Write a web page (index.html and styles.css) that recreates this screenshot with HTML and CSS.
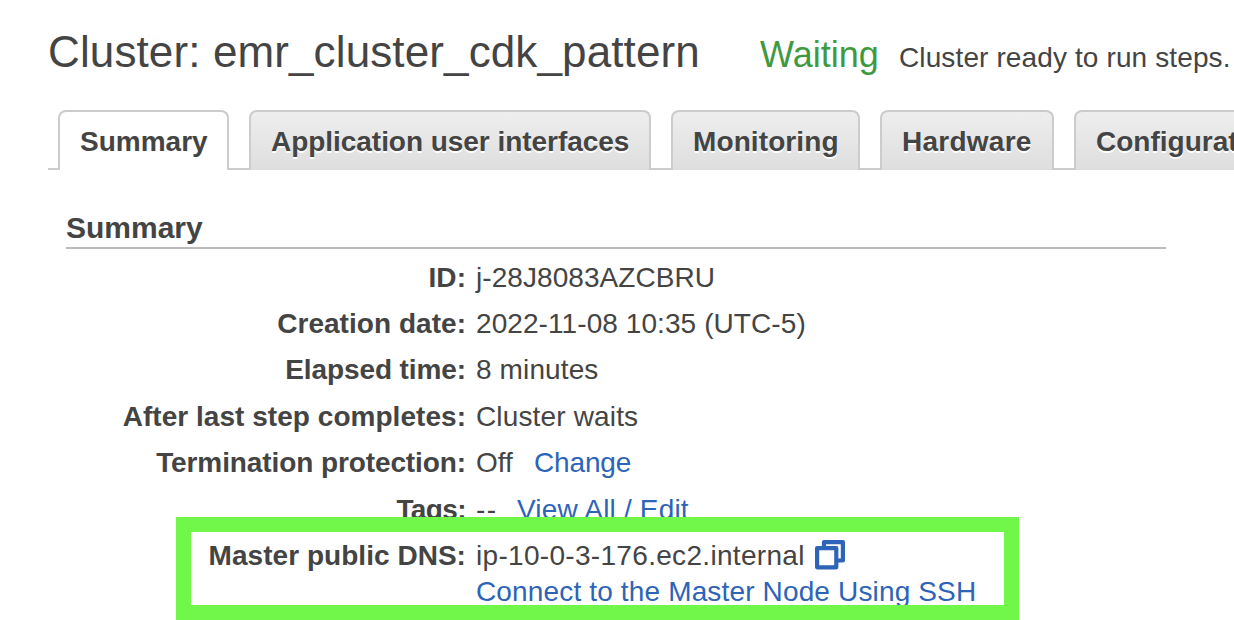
FILE: index.html
```html
<!DOCTYPE html>
<html lang="en">
<head>
<meta charset="utf-8">
<title>Cluster details</title>
<link rel="stylesheet" href="styles.css">
</head>
<body>
<main class="page">
  <header class="header">
    <h1 class="title">Cluster: emr_cluster_cdk_pattern</h1>
    <span class="state">Waiting</span>
    <span class="message">Cluster ready to run steps.</span>
  </header>
  <nav class="tabs">
    <a class="tab tab-active">Summary</a>
    <a class="tab tab-apps">Application user interfaces</a>
    <a class="tab tab-monitoring">Monitoring</a>
    <a class="tab tab-hardware">Hardware</a>
    <a class="tab tab-config">Configurations</a>
  </nav>
  <section class="panel">
    <h2 class="heading">Summary</h2>
    <dl class="details">
      <dt>ID:</dt><dd class="id">j-28J8083AZCBRU</dd>
      <dt class="created">Creation date:</dt><dd class="date">2022-11-08 10:35 (UTC-5)</dd>
      <dt class="elapsed">Elapsed time:</dt><dd class="duration">8 minutes</dd>
      <dt>After last step completes:</dt><dd class="after">Cluster waits</dd>
      <dt class="protection">Termination protection:</dt><dd><span class="off">Off</span><a class="link change">Change</a></dd>
      <dt class="tags">Tags:</dt><dd><span class="dashes">--</span><a class="link edit">View All / Edit</a></dd>
      <dt>Master public DNS:</dt>
      <dd>
        <div class="dns"><span>ip-10-0-3-176.ec2.internal</span>
          <svg class="copy" viewBox="0 0 30 30" width="30" height="30" fill="none" stroke="#2d64b8" stroke-width="4.2" stroke-linejoin="round"><path d="M9 8V2.1H27.9V20.5H22"/><rect x="2.1" y="8.1" width="19.2" height="19.2" fill="#fff"/></svg>
        </div>
        <a class="link ssh">Connect to the Master Node Using SSH</a>
      </dd>
    </dl>
  </section>
  <div class="highlight"></div>
</main>
</body>
</html>
```
FILE: styles.css
```css
body {
  margin: 0;
  background: #fff;
  color: #444;
  font: 28px/36px "Liberation Sans", Arial, sans-serif;
}
.page {
  position: relative;
  width: 1234px;
  height: 620px;
  overflow: hidden;
  white-space: nowrap;
}
.header {
  display: flex;
  align-items: baseline;
  height: 83px;
  padding: 27px 0 0 48px;
}
.title {
  width: 712px;
  margin: 0;
  font-size: 44px;
  font-weight: 400;
  line-height: 50px;
  letter-spacing: 0.12px;
}
.state { width: 139px; font-size: 36px; color: #3f9a3f; }
.message { letter-spacing: 0.12px; }
.tabs {
  display: flex;
  gap: 20px;
  height: 60px;
  margin-left: 48px;
  padding-left: 10px;
  background: linear-gradient(#ccc, #ccc) 0 100% / 100% 2px no-repeat;
}
.tab {
  box-sizing: border-box;
  flex: none;
  padding: 12px 0 0 20px;
  border: 2px solid #ccc;
  border-bottom: 0;
  border-radius: 8px 8px 0 0;
  background: linear-gradient(#eee, #dedede);
  font-weight: 700;
  text-shadow: 0 2px 0 #fff;
}
.tab-active { width: 171px; background: #fff; }
.tab-apps { width: 402px; letter-spacing: -0.04px; }
.tab-monitoring { width: 189px; letter-spacing: 0.1px; }
.tab-hardware { width: 174px; letter-spacing: 0.25px; }
.tab-config { width: 240px; }
.panel { width: 1100px; padding: 38px 0 0 66px; }
.heading {
  height: 39px;
  margin: 0;
  border-bottom: 2px solid #bbb;
  font-size: 30px;
  line-height: 40px;
}
.details {
  display: grid;
  grid-template-columns: 400px 1fr;
  gap: 10.4px 10px;
  margin: 10.6px 0 0;
}
.details dt { font-weight: 700; text-align: right; letter-spacing: 0.04px; }
.details .elapsed { letter-spacing: -0.1px; }
.details .protection { letter-spacing: -0.1px; }
.details .tags { letter-spacing: -0.6px; }
.details dd { margin: 0; }
.id { letter-spacing: 0.07px; }
.date { letter-spacing: 0.08px; }
.duration { letter-spacing: 0.12px; }
.after { letter-spacing: 0.15px; }
.link { color: #2d64b8; }
.off { display: inline-block; width: 58px; }
.change { letter-spacing: -0.15px; }
.dashes { display: inline-block; width: 41px; letter-spacing: 1.4px; }
.edit { letter-spacing: 0.18px; }
.dns { display: flex; align-items: center; height: 36px; }
.dns span { width: 339px; letter-spacing: 0.31px; }
.copy { margin-bottom: 2px; }
.ssh { display: block; letter-spacing: 0.15px; }
.highlight {
  position: absolute;
  left: 176px;
  top: 517px;
  width: 813px;
  height: 73px;
  border: 15px solid #71f74a;
}
```
